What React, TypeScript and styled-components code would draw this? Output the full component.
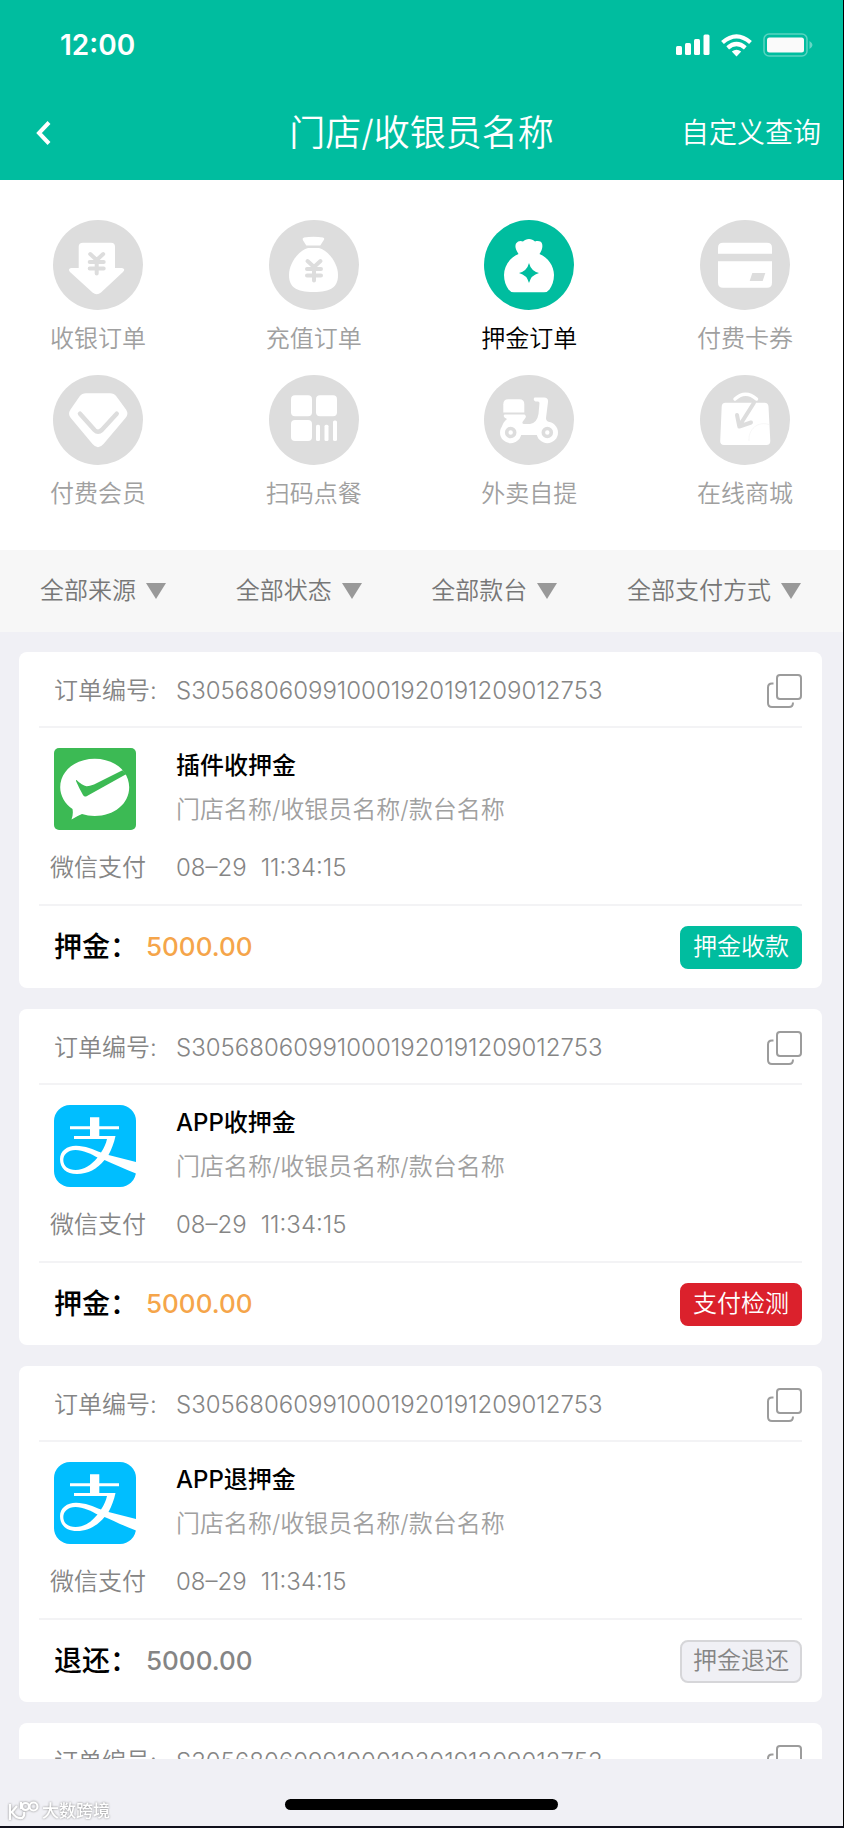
import React from "react";
import styled, { createGlobalStyle } from "styled-components";

const GREEN = "#00bd9f";
const GREY = "#dddddd";

const GlobalStyle = createGlobalStyle`
  *, *::before, *::after { box-sizing: border-box; }
  body {
    margin: 0;
    font-family: Inter, "Noto Sans CJK SC", sans-serif;
    font-weight: 350;
    color: #000;
  }
  button, select { font: inherit; color: inherit; border: 0; padding: 0; background: none; cursor: pointer; }
`;

const Screen = styled.div`
  display: flex;
  flex-direction: column;
  height: 100vh;
  background: #f0f0f5;
  border-right: 1px solid #000;
  border-bottom: 2px solid #10101c;
`;

const Header = styled.header`
  background: ${GREEN};
  color: #fff;
`;

const StatusBar = styled.div`
  display: flex;
  align-items: center;
  justify-content: space-between;
  height: 84px;
  padding: 6px 30px 0 60px;
`;

const Clock = styled.time`
  font-size: 28px;
  line-height: 32px;
  font-weight: 600;
`;

const Indicators = styled.div`
  display: flex;
  align-items: center;
  gap: 11px;
`;

const NavBar = styled.nav`
  display: grid;
  grid-template-columns: 1fr auto 1fr;
  align-items: center;
  height: 96px;
  padding: 2px 22px 0;
`;

const BackButton = styled.button`
  display: flex;
  justify-self: start;
  padding-left: 14px;
`;

const PageTitle = styled.h1`
  margin: 0;
  font-size: 36px;
  line-height: 44px;
  font-weight: 350;
`;

const QueryButton = styled.button`
  justify-self: end;
  font-size: 28px;
  line-height: 36px;
`;

const Categories = styled.section`
  display: grid;
  grid-template-columns: repeat(4, 96px);
  justify-content: space-between;
  row-gap: 18px;
  padding: 40px 50px 38px;
  background: #fff;
`;

const Category = styled.button<{ $active?: boolean }>`
  display: flex;
  flex-direction: column;
  align-items: center;
  gap: 11px;
  font-size: 24px;
  line-height: 36px;
  color: ${(p) => (p.$active ? "#000" : "#a0a0a0")};
`;

const Filters = styled.section`
  display: flex;
  justify-content: space-between;
  align-items: center;
  height: 82px;
  padding: 0 42px 0 40px;
  background: #f7f7f7;
`;

const Filter = styled.label`
  display: grid;
  align-items: center;
  > * { grid-area: 1 / 1; }
  svg { justify-self: end; pointer-events: none; }
`;

const FilterSelect = styled.select`
  appearance: none;
  padding-right: 30px;
  font-size: 24px;
  line-height: 36px;
  color: #777;
`;

const OrderList = styled.main`
  flex: 1;
  min-height: 0;
  overflow-y: auto;
  scrollbar-width: none;
  display: flex;
  flex-direction: column;
  gap: 21px;
  padding: 20px 21px 0 19px;
`;

const Card = styled.article`
  flex: none;
  padding: 0 20px;
  background: #fff;
  border-radius: 8px;
  font-size: 24px;
  line-height: 36px;
  color: #858585;
`;

const CardHead = styled.div`
  display: flex;
  align-items: center;
  height: 76px;
  padding: 4px 0 0 15px;
  border-bottom: 2px solid #f3f3f5;
`;

const OrderLabel = styled.span`
  width: 122px;
`;

const CopyButton = styled.button`
  display: flex;
  margin-left: auto;
`;

const CardBody = styled.div`
  display: grid;
  grid-template-columns: 96px 1fr;
  column-gap: 30px;
  row-gap: 20px;
  padding: 20px 0 18px 11px;
  border-bottom: 2px solid #f3f3f5;
`;

const LogoBox = styled.div`
  display: flex;
  padding-left: 4px;
`;

const Details = styled.div`
  display: flex;
  flex-direction: column;
  gap: 8px;
`;

const CardTitle = styled.h2`
  margin: 0;
  font-size: 24px;
  line-height: 36px;
  font-weight: 500;
  color: #000;
`;

const StoreName = styled.p`
  margin: 0;
  color: #a0a0a0;
`;

const OrderTime = styled.time`
  display: flex;
  gap: 14px;
`;

const CardFoot = styled.div`
  display: flex;
  align-items: center;
  height: 82px;
  padding-left: 15px;
  font-size: 28px;
  font-weight: 500;
`;

const AmountLabel = styled.span`
  width: 92px;
  color: #000;
`;

const Amount = styled.span<{ $muted?: boolean }>`
  font-size: 26px;
  color: ${(p) => (p.$muted ? "#858585" : "#f5a54a")};
`;

type Tone = "green" | "red" | "plain";
const tones: Record<Tone, string> = {
  green: `background: ${GREEN}; color: #fff; border-color: ${GREEN};`,
  red: "background: #db212c; color: #fff; border-color: #db212c;",
  plain: "background: #f0f0f5; color: #858585; border-color: #d6d6d9;",
};

const ActionButton = styled.button<{ $tone: Tone }>`
  margin-left: auto;
  height: 43px;
  padding: 0 11px;
  border: 2px solid;
  border-radius: 8px;
  font-size: 24px;
  font-weight: 350;
  line-height: 36px;
  ${(p) => tones[p.$tone]}
`;

const Footer = styled.footer`
  position: relative;
  display: flex;
  justify-content: center;
  height: 67px;
  padding-top: 40px;
`;

const HomeBar = styled.div`
  width: 273px;
  height: 11px;
  border-radius: 6px;
  background: #000;
`;

const Watermark = styled.div`
  position: absolute;
  left: 8px;
  bottom: 3px;
  display: flex;
  align-items: center;
  gap: 3px;
  font-size: 17px;
  line-height: 24px;
  font-weight: 500;
  color: #fff;
  filter: drop-shadow(0 0 1px #888);
`;

const Yen = ({ x, y }: { x: number; y: number }) => (
  <path
    d={`M${x - 6.5} ${y - 9}L${x} ${y - 3}L${x + 6.5} ${y - 9}M${x - 7} ${y - 1}H${x + 7}M${x - 7} ${y + 5.5}H${x + 7}M${x} ${y - 2}V${y + 10.5}`}
    stroke={GREY}
    strokeWidth="4"
    strokeLinecap="round"
    strokeLinejoin="round"
    fill="none"
  />
);

const glyphs: Record<string, React.ReactNode> = {
  cashier: (
    <>
      <path d="M30 22.7H58Q62 22.7 62 26.7V48H69Q73 49 70 52L48 72.5Q43.8 76 39.5 72.5L17 52Q14.5 49 18 48H25.7V26.7Q25.7 22.7 30 22.7Z" />
      <Yen x={43.7} y={43} />
    </>
  ),
  recharge: (
    <>
      <path d="M35 17.5Q44.5 16 54 17.5Q56 18.2 54.8 20L51.3 25.5H37.3L33.8 20Q33 18.2 35 17.5Z" />
      <path d="M39 28H50C58 30 69 42 69 55C69 67 62 72 44.5 72C27 72 20 67 20 55C20 42 31 30 39 28Z" />
      <Yen x={45} y={50} />
    </>
  ),
  deposit: (
    <>
      <path d="M34.5 34C31 29 31 26 32 23.5C34 20.5 37 20.5 39 21.5C42 18 48 18 51 21.5C54 20.5 57 21 58 23.5C59 27 58 30 55.5 34C64 37.5 70 46 70 55C70 61 68 66 65.5 69.5Q63.5 72.3 60 72.3H30Q26.5 72.3 24.5 69.5C22 66 20 61 20 55C20 46 26 37.5 34.5 34Z" />
      <path d="M45 43Q47 51 55 53Q47 55 45 63Q43 55 35 53Q43 51 45 43Z" fill={GREEN} />
    </>
  ),
  card: (
    <>
      <path d="M18 33.7V27.7Q18 22.7 23 22.7H67Q72 22.7 72 27.7V33.7Z" />
      <path d="M18 41.3H72V62.7Q72 67.7 67 67.7H23Q18 67.7 18 62.7Z" />
      <path d="M52.3 53H65.3L62.7 61H49.7Z" fill={GREY} />
    </>
  ),
  member: (
    <>
      <path d="M33 18.3H57Q61 18.3 63.5 21.5L73 34.5Q76 39 72.5 43L50.5 69Q45 75.5 39.5 69L17.8 43Q14.5 39 17.5 34.5L26.5 21.5Q29 18.3 33 18.3Z" />
      <path d="M27 38.7L41.5 55Q45 58.5 48.8 55L63.7 38.7" fill="none" stroke={GREY} strokeWidth="4.5" strokeLinecap="round" />
    </>
  ),
  scan: (
    <>
      <rect x="22" y="20.3" width="21" height="21" rx="4" />
      <rect x="47" y="20.3" width="21" height="21" rx="4" />
      <rect x="22" y="45" width="21" height="21" rx="4" />
      <rect x="47" y="49.7" width="4" height="16.3" rx="1.5" />
      <rect x="55.5" y="49.7" width="4" height="16.3" rx="1.5" />
      <rect x="64" y="45.5" width="4" height="20.5" rx="1.5" />
    </>
  ),
  delivery: (
    <>
      <path d="M19.3 37.5V29.3Q19.3 24.3 24.3 24.3H35.3Q40.3 24.3 40.3 29.3V37.5Z" />
      <path d="M20.5 39.5H40.5Q43 41 41 43.5L38.5 47Q38 49 40 49H46Q53 48 54.5 39L55.5 28Q55.3 26.5 54 26.5H51.5Q48.5 25 50.5 22.5H60Q64.5 22.5 64 27L62 43Q62 46 65 47L70 50L64 60H26L18 52Q19 47 23 44Q18 42 20.5 39.5Z" />
      <circle cx="26.7" cy="57.5" r="10.7" />
      <circle cx="63.3" cy="57.5" r="10.7" />
      <circle cx="26.7" cy="57.5" r="4" fill="none" stroke={GREY} strokeWidth="3.6" />
      <circle cx="63.3" cy="57.5" r="4" fill="none" stroke={GREY} strokeWidth="3.6" />
    </>
  ),
  mall: (
    <>
      <path d="M25.5 27.7H64.5Q68.3 27.7 68.5 31.5L70.3 66Q70.3 70 66.5 70H24Q20 70 20.2 66L21.7 31.5Q21.8 27.7 25.5 27.7Z" />
      <path d="M35 24Q45.5 14.5 56.5 24" fill="none" stroke="#fff" strokeWidth="3.5" strokeLinecap="round" />
      <path d="M54 27.7L39.3 51M37 40L39.3 51.5L51 47.5" fill="none" stroke={GREY} strokeWidth="4" strokeLinecap="round" strokeLinejoin="round" />
      <path d="M49 66C48 54 58 46 69 49.5" fill="none" stroke="#f3f3f3" strokeWidth="0.7" />
    </>
  ),
};

const CategoryIcon = ({ name, active }: { name: string; active?: boolean }) => (
  <svg width="90" height="90" viewBox="0 0 90 90" fill="#fff" aria-hidden="true">
    <circle cx="45" cy="45" r="45" fill={active ? GREEN : GREY} />
    {glyphs[name]}
  </svg>
);

const WechatLogo = () => (
  <svg width="82" height="82" viewBox="0 0 82 82" aria-hidden="true">
    <rect width="82" height="82" rx="5" fill="#3cba54" />
    <path d="M40.7 10.7C60 10.7 75.2 23 75.2 39.3C75.2 56 60 68 40.7 68C36 68 32 67.3 28 66Q23 68 17.5 71.5Q19.5 66 18.5 61C11 56 6.2 48 6.2 39.3C6.2 23 21.5 10.7 40.7 10.7Z" fill="#fff" />
    <path d="M22.5 32Q28 37.5 32.5 38.3Q35 38.5 40 36.5L68.5 22.3L72.5 26L33 48Q30.5 49.5 29 47Q24.5 39 22 33Q21.8 31.8 22.5 32Z" fill="#3cba54" />
  </svg>
);

const AlipayLogo = () => (
  <svg width="82" height="82" viewBox="0 0 82 82" aria-hidden="true">
    <rect width="82" height="82" rx="16" fill="#00beff" />
    <g fill="#fff">
      <path d="M36 12.3H45.3V21.3H65V24.3H45.3V31H61.5C60 38 57.5 44.5 54.5 50L82 57V68.5C70 64 60 59 50.5 55C43 64 34 69 23 69C12 69 6 63 6 54C6 46 13 40.7 22 40.7C31 40.7 39.500 44.5 47 47.5C50 43 52 38.5 53 34H20V31H36V24.3H16V21.3H36Z" />
      <path d="M43.5 52.5C37 49 29 45 21.5 45C14 45 9.3 49.5 9.3 55C9.3 61.5 14.5 65 21.5 65C30 65 37.5 60 43.5 52.5Z" fill="#00beff" />
    </g>
  </svg>
);

const CopyIcon = () => (
  <svg width="35" height="34" viewBox="0 0 35 34" fill="none" stroke="#9c9c9c" strokeWidth="2" aria-hidden="true">
    <rect x="10" y="1" width="24" height="24" rx="3" />
    <path d="M6.5 9.5H5Q1 9.5 1 13.5V29Q1 33 5 33H22Q26 33 26 28.5" />
  </svg>
);

const SignalIcon = () => (
  <svg width="34" height="22" viewBox="0 0 34 22" fill="#fff" aria-hidden="true">
    <rect x="0" y="12" width="6" height="9" rx="1.5" />
    <rect x="9" y="9" width="6" height="12" rx="1.5" />
    <rect x="18" y="5" width="6" height="16" rx="1.5" />
    <rect x="27.5" y="0.5" width="6" height="20.5" rx="1.5" />
  </svg>
);

const WifiIcon = () => (
  <svg width="31" height="23" viewBox="0 0 31 23" aria-hidden="true">
    <g fill="none" stroke="#fff" strokeWidth="4.2">
      <path d="M1.5 8.5Q15.5 -3.8 29.5 8.5" />
      <path d="M6.7 13.8Q15.5 6.2 24.3 13.8" />
    </g>
    <path d="M10.8 17.5Q15.5 14 20.2 17.5L15.5 22.5Z" fill="#fff" />
  </svg>
);

const BatteryIcon = () => (
  <svg width="50" height="24" viewBox="0 0 50 24" aria-hidden="true">
    <rect x="1" y="1" width="43" height="22" rx="5" fill="none" stroke="#fff" strokeOpacity="0.35" strokeWidth="1.5" />
    <rect x="4" y="4.5" width="37" height="15" rx="2.5" fill="#fafafa" />
    <path d="M46.5 8Q49.5 10 49.5 12Q49.5 14 46.5 16Z" fill="#fff" fillOpacity="0.4" />
  </svg>
);

const categories = [
  { icon: "cashier", label: "收银订单" },
  { icon: "recharge", label: "充值订单" },
  { icon: "deposit", label: "押金订单", active: true },
  { icon: "card", label: "付费卡券" },
  { icon: "member", label: "付费会员" },
  { icon: "scan", label: "扫码点餐" },
  { icon: "delivery", label: "外卖自提" },
  { icon: "mall", label: "在线商城" },
];

const filters = ["全部来源", "全部状态", "全部款台", "全部支付方式"];

interface Order {
  logo: "wechat" | "alipay";
  title: string;
  amountLabel: string;
  action: string;
  tone: Tone;
}

const orders: Order[] = [
  { logo: "wechat", title: "插件收押金", amountLabel: "押金：", action: "押金收款", tone: "green" },
  { logo: "alipay", title: "APP收押金", amountLabel: "押金：", action: "支付检测", tone: "red" },
  { logo: "alipay", title: "APP退押金", amountLabel: "退还：", action: "押金退还", tone: "plain" },
  { logo: "alipay", title: "APP退押金", amountLabel: "退还：", action: "押金退还", tone: "plain" },
];

const OrderCard = ({ order }: { order: Order }) => (
  <Card>
    <CardHead>
      <OrderLabel>订单编号:</OrderLabel>
      <span>S305680609910001920191209012753</span>
      <CopyButton aria-label="复制订单编号">
        <CopyIcon />
      </CopyButton>
    </CardHead>
    <CardBody>
      <LogoBox>{order.logo === "wechat" ? <WechatLogo /> : <AlipayLogo />}</LogoBox>
      <Details>
        <CardTitle>{order.title}</CardTitle>
        <StoreName>门店名称/收银员名称/款台名称</StoreName>
      </Details>
      <span>微信支付</span>
      <OrderTime>
        <span>08–29</span>
        <span>11:34:15</span>
      </OrderTime>
    </CardBody>
    <CardFoot>
      <AmountLabel>{order.amountLabel}</AmountLabel>
      <Amount $muted={order.tone === "plain"}>5000.00</Amount>
      <ActionButton $tone={order.tone}>{order.action}</ActionButton>
    </CardFoot>
  </Card>
);

export default function App() {
  return (
    <Screen>
      <GlobalStyle />
      <Header>
        <StatusBar>
          <Clock>12:00</Clock>
          <Indicators>
            <SignalIcon />
            <WifiIcon />
            <BatteryIcon />
          </Indicators>
        </StatusBar>
        <NavBar>
          <BackButton aria-label="返回">
            <svg width="15" height="24" viewBox="0 0 15 24" fill="none" stroke="#fff" strokeWidth="4" aria-hidden="true">
              <path d="M13 1.5L3 12L13 22.5" />
            </svg>
          </BackButton>
          <PageTitle>门店/收银员名称</PageTitle>
          <QueryButton>自定义查询</QueryButton>
        </NavBar>
      </Header>
      <Categories>
        {categories.map((c) => (
          <Category key={c.label} $active={c.active}>
            <CategoryIcon name={c.icon} active={c.active} />
            {c.label}
          </Category>
        ))}
      </Categories>
      <Filters>
        {filters.map((f) => (
          <Filter key={f}>
            <FilterSelect aria-label={f}>
              <option>{f}</option>
            </FilterSelect>
            <svg width="20" height="16" viewBox="0 0 20 16" fill="#999" aria-hidden="true">
              <path d="M0 0H20L10 16Z" />
            </svg>
          </Filter>
        ))}
      </Filters>
      <OrderList>
        {orders.map((o, i) => (
          <OrderCard key={i} order={o} />
        ))}
      </OrderList>
      <Footer>
        <HomeBar />
        <Watermark>
          <svg width="31" height="20" viewBox="0 0 31 20" fill="none" stroke="#fff" strokeWidth="2.2" aria-hidden="true">
            <path d="M2 3V19M3 12L9 5M4 11Q8 18 14 17Q17 15 16 11" />
            <path d="M13 1V8" />
            <circle cx="17.5" cy="5.5" r="3.5" />
            <circle cx="25.5" cy="5.5" r="4" />
          </svg>
          大数跨境
        </Watermark>
      </Footer>
    </Screen>
  );
}
